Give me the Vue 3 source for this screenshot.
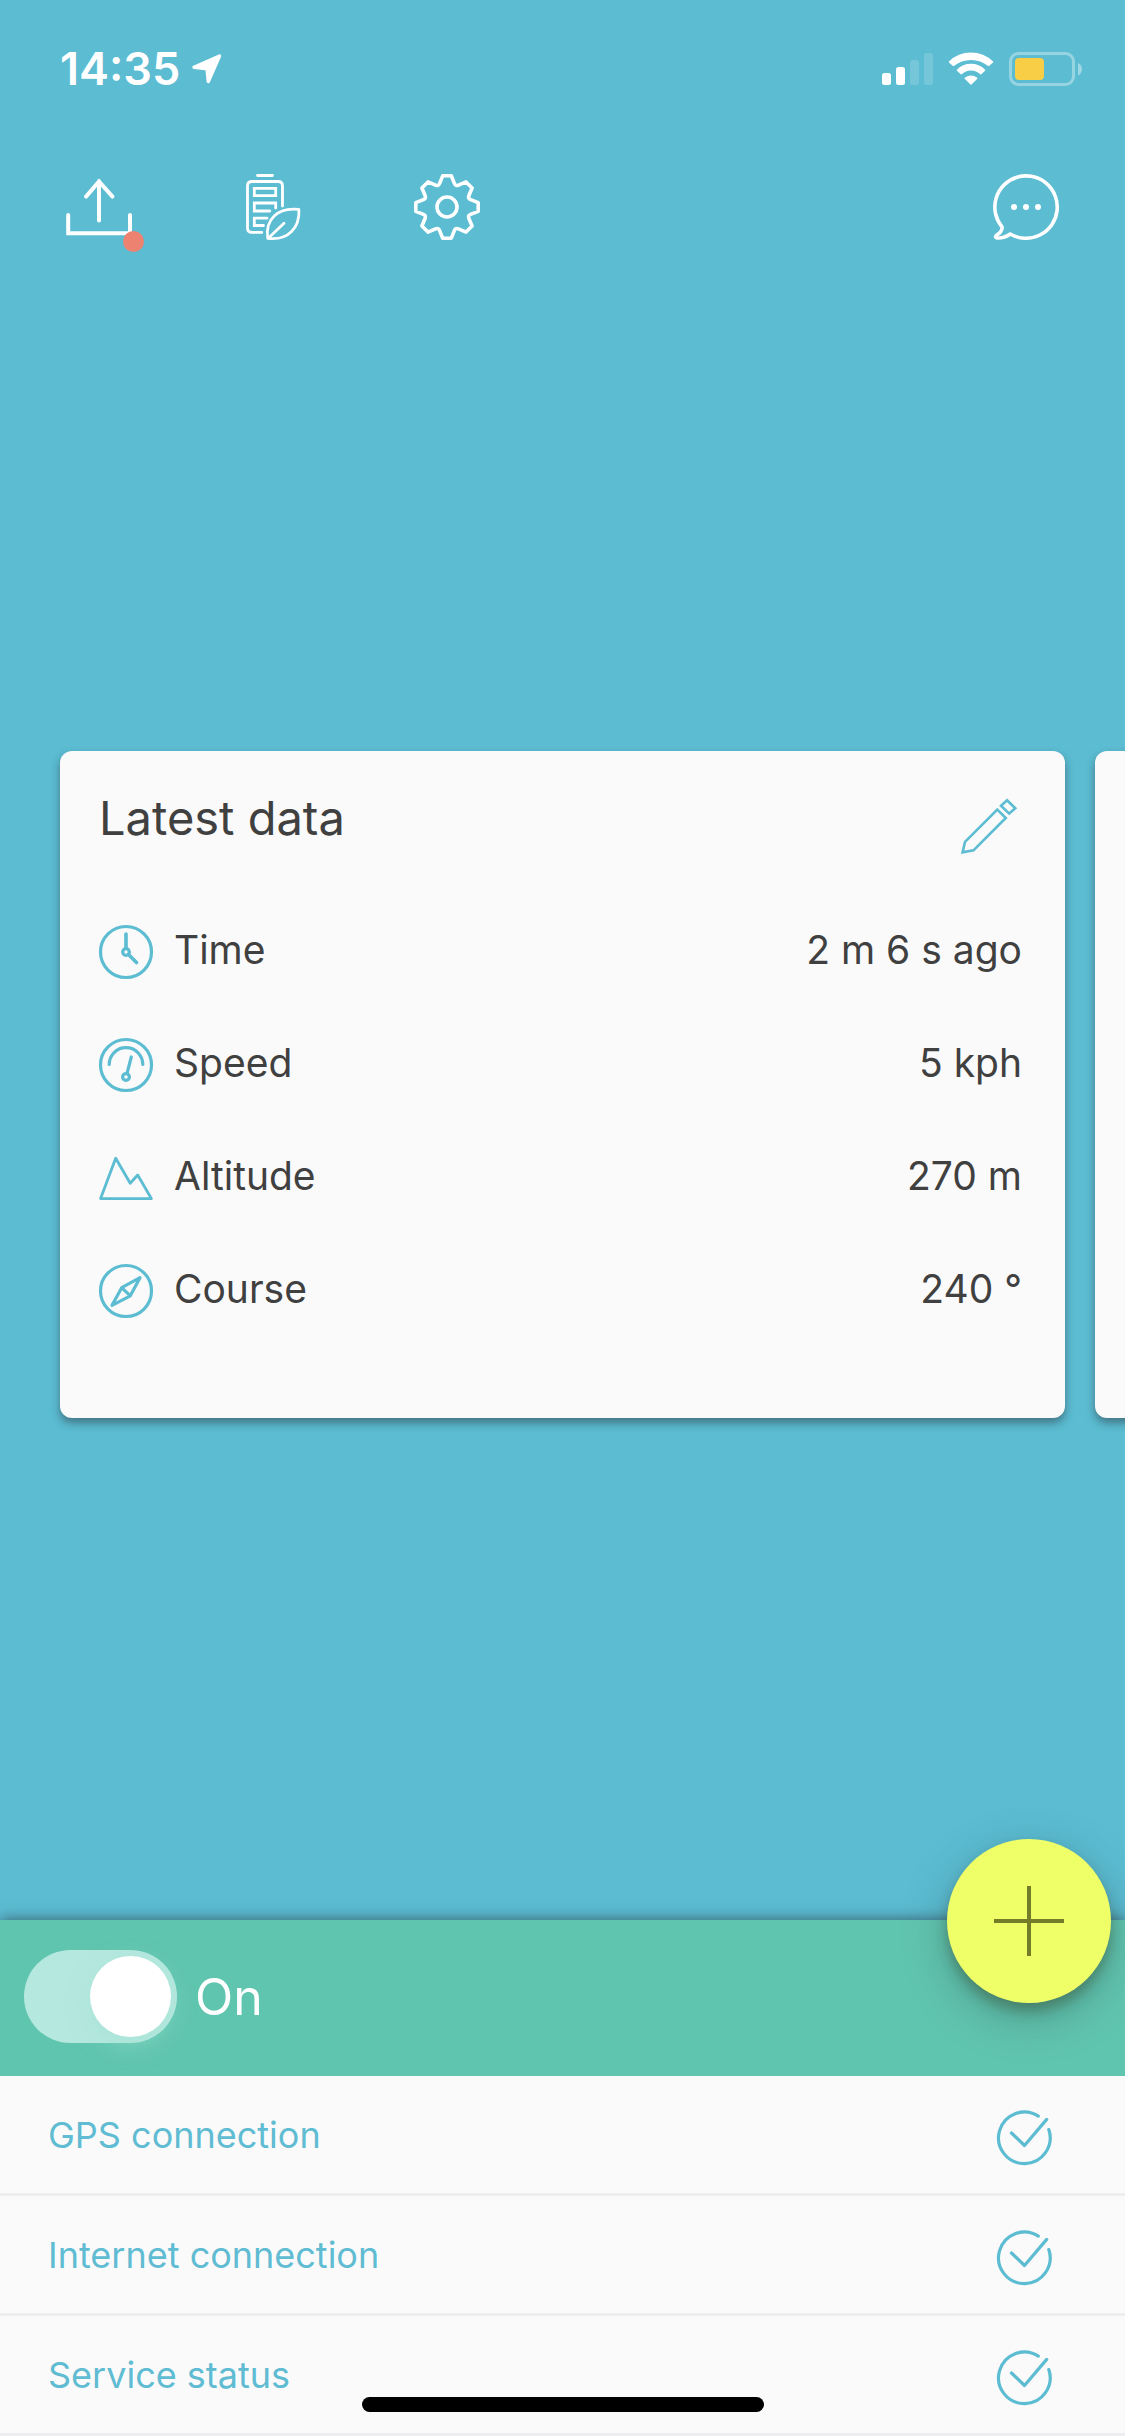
<script setup>
import { ref } from 'vue'

const tracking = ref(true)

const readings = [
  { icon: 'time', label: 'Time', value: '2 m 6 s ago' },
  { icon: 'speed', label: 'Speed', value: '5 kph' },
  { icon: 'altitude', label: 'Altitude', value: '270 m' },
  { icon: 'course', label: 'Course', value: '240 °' },
]

const statuses = ['GPS connection', 'Internet connection', 'Service status']

// Eight-tooth gear outline, one tooth profile rotated around (33, 33)
const gearPath = (() => {
  const at = (x, y, turn) => {
    const a = (turn * Math.PI) / 4
    const px = 33 + x * Math.cos(a) - y * Math.sin(a)
    const py = 33 + x * Math.sin(a) + y * Math.cos(a)
    return `${px.toFixed(2)} ${py.toFixed(2)}`
  }
  let d = ''
  for (let i = 0; i < 8; i++) {
    d += `${i ? 'L' : 'M'}${at(-4.3, -31.2, i)}L${at(4.3, -31.2, i)}L${at(7.4, -23.6, i)}`
    d += `Q${at(8.6, -20.6, i)} ${at(11.5, -21.9, i)}`
  }
  return d + 'Z'
})()
</script>

<template>
  <div class="page">
    <header>
      <div class="status-bar">
        <span class="clock">14:35</span>
        <svg class="location" width="30" height="30" viewBox="0 0 30 30" aria-hidden="true">
          <path d="M27.5 2 16.3 27.5 15 14.8 2 13.2Z" fill="#fff" stroke="#fff" stroke-width="3.4" stroke-linejoin="round" />
        </svg>
        <div class="indicators">
          <svg width="51" height="34" viewBox="0 0 51 34" aria-hidden="true" fill="#fff">
            <rect x="0" y="21" width="9" height="12" rx="2.5" />
            <rect x="14" y="15" width="9" height="18" rx="2.5" />
            <rect x="28" y="8" width="9" height="25" rx="2.5" opacity=".16" />
            <rect x="42" y="1" width="9" height="32" rx="2.5" opacity=".16" />
          </svg>
          <svg width="46" height="34" viewBox="0 0 46 34" aria-hidden="true" fill="#fff" stroke="#fff" stroke-width="1.4" stroke-linejoin="round">
            <path d="M1.4 10A31 31 0 0 1 44.6 10L40.6 13.4A28 28 0 0 0 5.4 13.4Z" />
            <path d="M9.4 18.2A19 19 0 0 1 36.6 18.2L32.8 21.8A14 14 0 0 0 13.2 21.8Z" />
            <path d="M17.2 26.2A10 10 0 0 1 28.8 26.2L23 32Z" />
          </svg>
          <svg width="74" height="34" viewBox="0 0 74 34" aria-hidden="true">
            <rect x="1.5" y="1.5" width="63" height="31" rx="8" fill="none" stroke="#fff" stroke-opacity=".36" stroke-width="3" />
            <path d="M69 11v12.5Q73 21.500 73 17.200T69 11Z" fill="#fff" fill-opacity=".4" />
            <rect x="6" y="6" width="29" height="22" rx="4" fill="#f7ce46" />
          </svg>
        </div>
      </div>

      <nav class="toolbar">
        <button type="button" class="tool" aria-label="Upload">
          <svg width="66" height="66" viewBox="0 0 66 66" fill="none" stroke="#fff" stroke-width="4" stroke-linecap="round">
            <path d="M2.200 41V59.300H64V41M33 46.500V7M20 22.600 33 7.500 46.500 22.600" />
          </svg>
          <span class="dot"></span>
        </button>
        <button type="button" class="tool" aria-label="Battery saver">
          <svg width="66" height="66" viewBox="0 0 66 66" fill="none" stroke="#fff" stroke-width="2.800" stroke-linecap="round">
            <path d="M17.500 1.500H32.500M42.500 32V12Q42.500 7.500 38 7.500H12Q7.500 7.500 7.500 12V54Q7.500 58.400 12 58.400H21.800" />
            <path d="M14.300 14.400H35.700V21.700H14.300ZM35.700 34V29H14.300V37H29.800M27 44.200H14.300V51.500H23.500" />
            <path d="M27.700 64.400C25 45 38 33 58.900 35.400 60 54 48 66.800 27.700 64.400ZM28.500 64 44 49.200" stroke-linejoin="round" />
          </svg>
        </button>
        <button type="button" class="tool" aria-label="Settings">
          <svg width="66" height="66" viewBox="0 0 66 66" fill="none" stroke="#fff" stroke-width="3.600">
            <path :d="gearPath" stroke-linejoin="round" />
            <circle cx="33" cy="33" r="10" />
          </svg>
        </button>
        <button type="button" class="tool chat" aria-label="Messages">
          <svg width="66" height="66" viewBox="0 0 66 66" fill="none" stroke="#fff" stroke-width="3.600" stroke-linejoin="round">
            <path d="M9.300 53.300A31.200 31.200 0 1 1 17.300 60Q11 64.500 4 64 1 63 4.200 60.700 8.500 58.500 9.300 53.300Z" />
            <g fill="#fff" stroke="none"><circle cx="21" cy="33" r="3" /><circle cx="33" cy="33" r="3" /><circle cx="45" cy="33" r="3" /></g>
          </svg>
        </button>
      </nav>
    </header>

    <main>
      <div class="cards">
        <section class="card">
          <div class="card-head">
            <h2>Latest data</h2>
            <button type="button" class="edit" aria-label="Edit">
              <svg width="56" height="56" viewBox="0 0 56 56" fill="none" stroke="#5bbcd2" stroke-width="2.600">
                <path d="M36.300 11.600 44.800 20 12.500 52.300 1.600 54.400 4 43.800ZM46 2.200 54.300 10.300 48.200 15.600 40 7.800Z" />
              </svg>
            </button>
          </div>
          <dl>
            <div v-for="r in readings" :key="r.label" class="reading">
              <svg width="54" height="54" viewBox="0 0 54 54" aria-hidden="true" fill="none" stroke="#5bbcd2" stroke-width="3.200">
                <template v-if="r.icon === 'time'">
                  <circle cx="27" cy="27" r="25.500" />
                  <circle cx="27" cy="27" r="3.300" />
                  <path d="M27 23V9M30 30 37.500 37.500" stroke-width="3.600" stroke-linecap="round" />
                </template>
                <template v-else-if="r.icon === 'speed'">
                  <circle cx="27" cy="27" r="25.500" />
                  <path d="M10.200 26.500A16.800 16.800 0 0 1 43.800 26.500M32.300 19 28 35.500" stroke-linecap="round" />
                  <circle cx="27" cy="39" r="3.400" />
                </template>
                <path v-else-if="r.icon === 'altitude'" d="M1.600 47.600 16.700 7.200 31.200 32.200 38.700 24 52.400 47.600Z" stroke-width="2.800" stroke-linejoin="round" />
                <template v-else>
                  <circle cx="27" cy="27" r="25.500" />
                  <path d="M41 13.700 22.700 23.700 13 41.300 31.300 31.800ZM22.700 23.700 31.300 31.800" stroke-linejoin="round" />
                </template>
              </svg>
              <dt>{{ r.label }}</dt>
              <dd>{{ r.value }}</dd>
            </div>
          </dl>
        </section>
        <section class="card"></section>
      </div>
    </main>

    <footer>
      <div class="switch-bar">
        <input id="tracking" v-model="tracking" type="checkbox" role="switch" class="switch" />
        <label for="tracking">{{ tracking ? 'On' : 'Off' }}</label>
      </div>
      <button type="button" class="fab" aria-label="Add">
        <svg width="70" height="70" viewBox="0 0 70 70" stroke="#737c28" stroke-width="4"><path d="M35 0V70M0 35H70" /></svg>
      </button>
      <ul>
        <li v-for="s in statuses" :key="s">
          <span>{{ s }}</span>
          <svg class="check" width="55" height="55" viewBox="0 0 55 55" aria-hidden="true" fill="none" stroke="#5bbcd2" stroke-width="3.200" stroke-linecap="round" stroke-linejoin="round">
            <path d="M41.300 5.100A25.800 25.800 0 1 0 51.800 18.600M14.500 22 27.500 34.500 49.700 8.400" />
          </svg>
        </li>
      </ul>
    </footer>
    <div class="home-indicator"></div>
  </div>
</template>

<style>
body {
  margin: 0;
  background: #5bbcd2;
}
</style>

<style scoped>
.page {
  position: relative;
  display: flex;
  flex-direction: column;
  min-height: 100vh;
  overflow: hidden;
  background: #5bbcd2;
  color: #404040;
  font-family: Inter, "Liberation Sans", sans-serif;
}
button {
  border: 0;
  background: none;
  cursor: pointer;
}
svg {
  display: block;
  flex: none;
  overflow: visible;
}
.status-bar {
  display: flex;
  align-items: center;
  height: 138px;
  padding: 0 42px 0 60px;
  color: #fff;
}
.clock {
  font-size: 45px;
  font-weight: 600;
  line-height: 56px;
}
.location {
  margin-left: 12px;
}
.indicators {
  display: flex;
  gap: 15px;
  margin-left: auto;
}
.toolbar {
  display: flex;
  gap: 108px;
  padding: 36px 66px 9px;
}
.tool {
  position: relative;
  padding: 0;
}
.dot {
  position: absolute;
  right: -12px;
  bottom: -12px;
  width: 21px;
  height: 21px;
  border-radius: 50%;
  background: #ed8271;
}
.chat {
  margin-left: auto;
}
main {
  flex: 1;
  display: flex;
  align-items: center;
}
.cards {
  display: flex;
  gap: 30px;
  width: 100%;
  padding: 0 60px;
  box-sizing: border-box;
}
.card {
  flex: 0 0 100%;
  box-sizing: border-box;
  padding: 37px 43px 71px 39px;
  border-radius: 12px;
  background: #fafafa;
  box-shadow: 0 5px 9px rgba(40, 50, 60, 0.5);
}
.card-head {
  display: flex;
  align-items: flex-start;
  justify-content: space-between;
  margin-bottom: 31px;
}
h2 {
  margin: 0;
  font-size: 47px;
  font-weight: 400;
  line-height: 60px;
}
.edit {
  padding: 10px 5px;
}
dl {
  margin: 0;
}
.reading {
  display: flex;
  align-items: center;
  height: 113px;
  font-size: 39px;
  line-height: 48px;
}
dt,
dd {
  margin: 0;
  padding-bottom: 4px;
}
dt {
  margin-left: 21px;
}
dd {
  margin-left: auto;
}
footer {
  position: relative;
  box-shadow: 0 0 14px rgba(40, 50, 60, 0.7);
}
.switch-bar {
  display: flex;
  align-items: center;
  gap: 18px;
  padding: 30px 24px 33px;
  background: #60c5af;
  color: #fff;
  font-size: 50px;
  font-weight: 400;
  line-height: 64px;
}
.switch {
  appearance: none;
  display: flex;
  width: 153px;
  height: 93px;
  margin: 0;
  padding: 6px;
  box-sizing: border-box;
  border-radius: 47px;
  background: #b5e8df;
}
.switch::before {
  content: "";
  width: 81px;
  height: 81px;
  border-radius: 50%;
  background: #fff;
  box-shadow: 0 8px 22px rgba(160, 225, 210, 0.5);
}
.switch:checked::before {
  margin-left: auto;
}
.fab {
  position: absolute;
  top: -81px;
  right: 14px;
  display: flex;
  align-items: center;
  justify-content: center;
  width: 164px;
  height: 164px;
  padding: 0;
  border-radius: 50%;
  background: #efff68;
  box-shadow: 0 8px 12px rgba(60, 80, 50, 0.4), 0 14px 44px rgba(40, 70, 70, 0.35);
}
ul {
  margin: 0;
  padding: 0;
  list-style: none;
  background: #fafafa;
  color: #5fbcd2;
}
li {
  display: flex;
  align-items: center;
  justify-content: space-between;
  height: 120px;
  box-sizing: border-box;
  padding: 0 73px 0 48px;
  border-bottom: 3px solid #eeeef0;
  font-size: 36px;
  line-height: 44px;
}
.check {
  margin-top: 8px;
}
.home-indicator {
  position: absolute;
  bottom: 24px;
  left: 50%;
  width: 402px;
  height: 15px;
  border-radius: 8px;
  background: #000;
  transform: translateX(-50%);
}
</style>
